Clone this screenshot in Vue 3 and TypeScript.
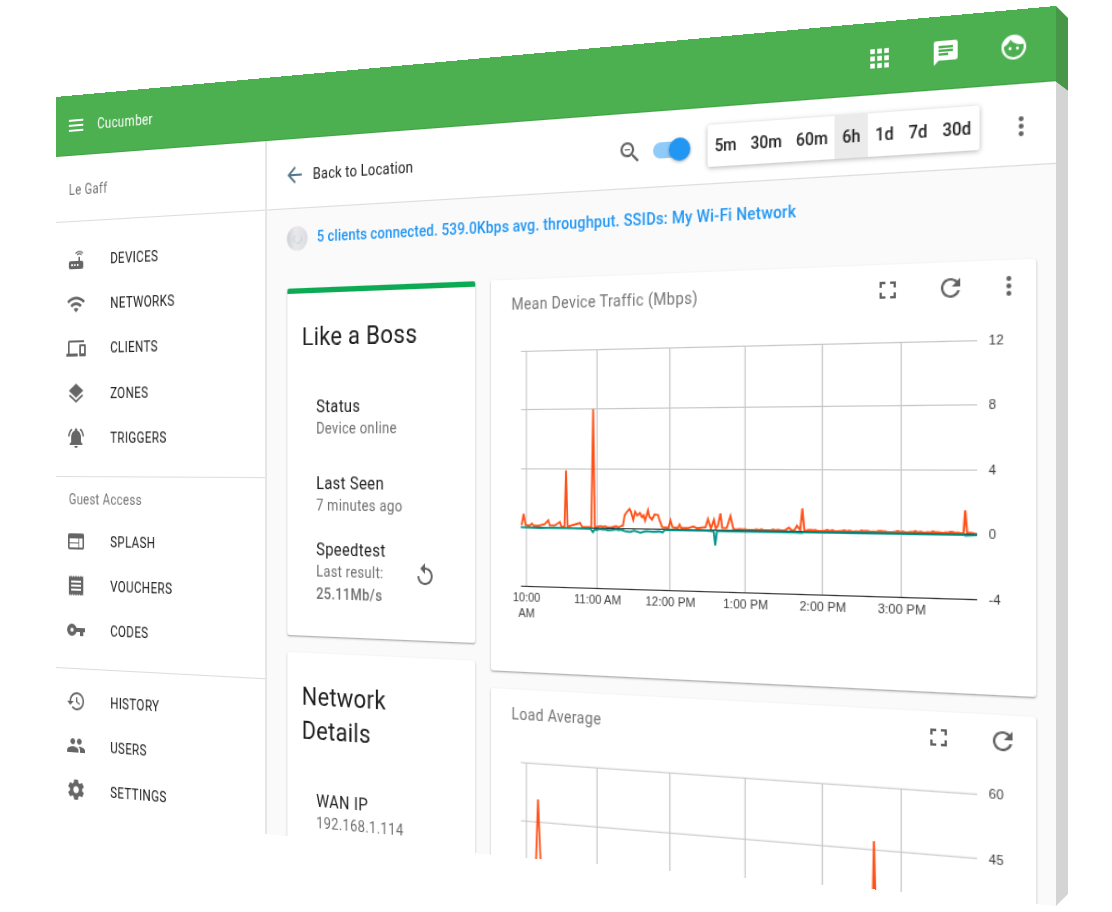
<script setup lang="ts">
interface NavItem {
  label: string
  icon: string
}
type Point = [number, number]

const icons: Record<string, string> = {
  menu: 'M3 18h18v-2H3v2zm0-5h18v-2H3v2zm0-7v2h18V6H3z',
  router:
    'M20.2 5.9l.8-.8C19.6 3.7 17.8 3 16 3s-3.6.7-5 2.1l.8.8C13 4.8 14.5 4.2 16 4.2s3 .6 4.2 1.7zm-.9.8c-.9-.9-2.1-1.4-3.3-1.4s-2.4.5-3.3 1.4l.8.8c.7-.7 1.6-1 2.5-1 .9 0 1.8.3 2.5 1l.8-.8zM19 13h-2V9h-2v4H5c-1.1 0-2 .9-2 2v4c0 1.1.9 2 2 2h14c1.1 0 2-.9 2-2v-4c0-1.1-.9-2-2-2zM8 18H6v-2h2v2zm3.5 0h-2v-2h2v2zm3.5 0h-2v-2h2v2z',
  wifi: 'M1 9l2 2c4.97-4.97 13.03-4.97 18 0l2-2C16.93 2.93 7.08 2.93 1 9zm8 8l3 3 3-3c-1.65-1.66-4.34-1.66-6 0zm-4-4l2 2c2.76-2.76 7.24-2.76 10 0l2-2C15.14 9.14 8.87 9.14 5 13z',
  devices:
    'M4 6h18V4H4c-1.1 0-2 .9-2 2v11H0v3h14v-3H4V6zm19 2h-6c-.55 0-1 .45-1 1v10c0 .55.45 1 1 1h6c.55 0 1-.45 1-1V9c0-.55-.45-1-1-1zm-1 9h-4v-7h4v7z',
  layers:
    'M11.99 18.54l-7.37-5.73L3 14.07l9 7 9-7-1.63-1.27-7.38 5.74zM12 16l7.36-5.73L21 9l-9-7-9 7 1.63 1.27L12 16z',
  bell: 'M7.58 4.08L6.15 2.65C3.75 4.48 2.17 7.3 2.03 10.5h2c.15-2.65 1.51-4.97 3.55-6.42zm12.39 6.42h2c-.15-3.2-1.73-6.02-4.12-7.85l-1.42 1.43c2.02 1.45 3.39 3.77 3.54 6.42zM18 11c0-3.07-1.64-5.64-4.5-6.32V4c0-.83-.67-1.5-1.5-1.5s-1.5.67-1.5 1.5v.68C7.63 5.36 6 7.92 6 11v5l-2 2v1h16v-1l-2-2v-5zm-6 11c.14 0 .27-.01.4-.04.65-.14 1.18-.58 1.44-1.18.1-.24.15-.5.15-.78h-4c.01 1.1.9 2 2.01 2z',
  web: 'M20 4H4c-1.1 0-1.99.9-1.99 2L2 18c0 1.1.9 2 2 2h16c1.1 0 2-.9 2-2V6c0-1.1-.9-2-2-2zm-5 14H4v-4h11v4zm0-5H4V9h11v4zm5 5h-4V9h4v9z',
  receipt:
    'M18 17H6v-2h12v2zm0-4H6v-2h12v2zm0-4H6V7h12v2zM3 22l1.5-1.5L6 22l1.5-1.5L9 22l1.5-1.5L12 22l1.5-1.5L15 22l1.5-1.5L18 22l1.5-1.5L21 22V2l-1.5 1.5L18 2l-1.5 1.5L15 2l-1.5 1.5L12 2l-1.5 1.5L9 2 7.5 3.5 6 2 4.5 3.5 3 2v20z',
  key: 'M12.65 10C11.83 7.67 9.61 6 7 6c-3.31 0-6 2.69-6 6s2.69 6 6 6c2.61 0 4.83-1.67 5.65-4H17v4h4v-4h2v-4H12.65zM7 14c-1.1 0-2-.9-2-2s.9-2 2-2 2 .9 2 2-.9 2-2 2z',
  history:
    'M13 3c-4.97 0-9 4.03-9 9H1l3.89 3.89.07.14L9 12H6c0-3.87 3.13-7 7-7s7 3.13 7 7-3.13 7-7 7c-1.93 0-3.68-.79-4.94-2.06l-1.42 1.42C8.27 19.99 10.51 21 13 21c4.97 0 9-4.03 9-9s-4.03-9-9-9zm-1 5v5l4.28 2.54.72-1.21-3.5-2.08V8H12z',
  people:
    'M16 11c1.66 0 2.99-1.34 2.99-3S17.66 5 16 5c-1.66 0-3 1.34-3 3s1.34 3 3 3zm-8 0c1.66 0 2.99-1.34 2.99-3S9.66 5 8 5C6.34 5 5 6.34 5 8s1.34 3 3 3zm0 2c-2.33 0-7 1.17-7 3.5V19h14v-2.5c0-2.33-4.67-3.5-7-3.5zm8 0c-.29 0-.62.02-.97.05 1.16.84 1.97 1.97 1.97 3.45V19h6v-2.5c0-2.33-4.67-3.5-7-3.5z',
  settings:
    'M19.43 12.98c.04-.32.07-.64.07-.98s-.03-.66-.07-.98l2.11-1.65c.19-.15.24-.42.12-.64l-2-3.46c-.12-.22-.39-.3-.61-.22l-2.49 1c-.52-.4-1.08-.73-1.69-.98l-.38-2.65C14.46 2.18 14.25 2 14 2h-4c-.25 0-.46.18-.49.42l-.38 2.65c-.61.25-1.17.59-1.69.98l-2.49-1c-.23-.09-.49 0-.61.22l-2 3.46c-.13.22-.07.49.12.64l2.11 1.65c-.04.32-.07.65-.07.98s.03.66.07.98l-2.11 1.65c-.19.15-.24.42-.12.64l2 3.46c.12.22.39.3.61.22l2.49-1c.52.4 1.08.73 1.69.98l.38 2.65c.03.24.24.42.49.42h4c.25 0 .46-.18.49-.42l.38-2.65c.61-.25 1.17-.59 1.69-.98l2.49 1c.23.09.49 0 .61-.22l2-3.46c.12-.22.07-.49-.12-.64l-2.11-1.65zM12 15.5c-1.93 0-3.5-1.57-3.5-3.5s1.57-3.5 3.5-3.5 3.5 1.57 3.5 3.5-1.57 3.5-3.5 3.5z',
  apps: 'M4 8h4V4H4v4zm6 12h4v-4h-4v4zm-6 0h4v-4H4v4zm0-6h4v-4H4v4zm6 0h4v-4h-4v4zm6-10v4h4V4h-4zm-6 4h4V4h-4v4zm6 6h4v-4h-4v4zm0 6h4v-4h-4v4z',
  chat: 'M20 2H4c-1.1 0-1.99.9-1.99 2L2 22l4-4h14c1.1 0 2-.9 2-2V4c0-1.1-.9-2-2-2zM6 9h12v2H6V9zm8 5H6v-2h8v2zm4-6H6V6h12v2z',
  face: 'M9 11.75c-.69 0-1.25.56-1.25 1.25s.56 1.25 1.25 1.25 1.25-.56 1.25-1.25-.56-1.25-1.25-1.25zm6 0c-.69 0-1.25.56-1.25 1.25s.56 1.25 1.25 1.25 1.25-.56 1.25-1.25-.56-1.25-1.25-1.25zM12 2C6.48 2 2 6.48 2 12s4.48 10 10 10 10-4.48 10-10S17.52 2 12 2zm0 18c-4.41 0-8-3.59-8-8 0-.29.02-.58.05-.86 2.36-1.05 4.23-2.98 5.21-5.37C11.07 8.33 14.05 10 17.42 10c.78 0 1.53-.09 2.25-.26.21.71.33 1.47.33 2.26 0 4.41-3.59 8-8 8z',
  back: 'M20 11H7.83l5.59-5.59L12 4l-8 8 8 8 1.41-1.41L7.83 13H20v-2z',
  zoomOut:
    'M15.5 14h-.79l-.28-.27C15.41 12.59 16 11.11 16 9.5 16 5.91 13.09 3 9.5 3S3 5.91 3 9.5 5.91 16 9.5 16c1.61 0 3.09-.59 4.23-1.57l.27.28v.79l5 4.99L20.49 19l-4.99-5zm-6 0C7.01 14 5 11.99 5 9.5S7.01 5 9.5 5 14 7.01 14 9.5 11.99 14 9.5 14zM7 9h5v1H7z',
  more: 'M12 8c1.1 0 2-.9 2-2s-.9-2-2-2-2 .9-2 2 .9 2 2 2zm0 2c-1.1 0-2 .9-2 2s.9 2 2 2 2-.9 2-2-.9-2-2-2zm0 6c-1.1 0-2 .9-2 2s.9 2 2 2 2-.9 2-2-.9-2-2-2z',
  fullscreen: 'M7 14H5v5h5v-2H7v-3zm-2-4h2V7h3V5H5v5zm12 7h-3v2h5v-5h-2v3zM14 5v2h3v3h2V5h-5z',
  refresh:
    'M17.65 6.35C16.2 4.9 14.21 4 12 4c-4.42 0-7.99 3.58-7.99 8s3.57 8 7.99 8c3.73 0 6.84-2.55 7.73-6h-2.08c-.82 2.33-3.04 4-5.65 4-3.31 0-6-2.69-6-6s2.69-6 6-6c1.66 0 3.14.69 4.22 1.78L13 11h7V4l-2.35 2.35z',
  replay:
    'M12 5V1L7 6l5 5V7c3.31 0 6 2.69 6 6s-2.69 6-6 6-6-2.69-6-6H4c0 4.42 3.58 8 8 8s8-3.58 8-8-3.58-8-8-8z',
}

const primary: NavItem[] = [
  { label: 'DEVICES', icon: 'router' },
  { label: 'NETWORKS', icon: 'wifi' },
  { label: 'CLIENTS', icon: 'devices' },
  { label: 'ZONES', icon: 'layers' },
  { label: 'TRIGGERS', icon: 'bell' },
]
const guest: NavItem[] = [
  { label: 'SPLASH', icon: 'web' },
  { label: 'VOUCHERS', icon: 'receipt' },
  { label: 'CODES', icon: 'key' },
]
const account: NavItem[] = [
  { label: 'HISTORY', icon: 'history' },
  { label: 'USERS', icon: 'people' },
  { label: 'SETTINGS', icon: 'settings' },
]
const ranges = ['5m', '30m', '60m', '6h', '1d', '7d', '30d']
const activeRange = '6h'

const gridX = [526.8, 596.4, 665.8, 735.3, 804.3, 872.5]
const timeLabels = ['', '11:00 AM', '12:00 PM', '1:00 PM', '2:00 PM', '3:00 PM']
const trafficRows = [
  { y: 265.5, label: '12' },
  { y: 317.5, label: '8' },
  { y: 370.5, label: '4' },
  { y: 422.5, label: '0' },
]

// Low-level jitter between the traffic peaks.
function noise(from: number, to: number, base: number, amp: number): Point[] {
  const out: Point[] = []
  let i = 0
  for (let x = from; x < to; x += 2.1) {
    i += 1
    out.push([x, base + amp * Math.abs(Math.sin(i * 2.7) * Math.cos(i * 1.3))])
  }
  return out
}

const zero = 422.7
const toLine = (pts: Point[]) => pts.map(([x, h]) => `${x.toFixed(1)},${(zero - h).toFixed(1)}`).join(' ')

const download: Point[] = [
  [522, 2], [524, 12], [526, 2], [530, 1.5], [532.4, 3.5], [534, 1.5], [539, 1.5], [545, 3], [548.6, 6.5],
  [550, 2], [555, 2], [560, 5.2], [561.5, 1], [564.6, 1], [566.1, 51], [567.6, 1], [571, 2], [579.8, 4.6],
  [582, 1], [590.8, 1], [592.6, 105], [594.2, 1.5],
  ...noise(596, 620, 1, 1.4),
  [621.4, 3], [623, 12], [624.8, 14.5], [627.6, 17.5], [629, 15], [631.2, 8], [633, 15], [635, 12], [637.6, 14],
  [639.5, 10.5], [641, 12], [642.4, 7.5], [645.2, 16.5], [646.5, 11], [649, 8.5], [651.5, 13], [654.7, 12.5],
  [656.5, 7], [658.6, 2], [664.5, 1.5], [666.4, 8], [668.4, 2], [673.4, 1.5], [674.9, 4.5], [676.3, 1.5],
  [683, 1.5], [688, 3], [691.2, 1.5], [699, 2.5], [701.3, 9.5], [704, 1.5], [706.8, 9], [708.5, 1.5],
  [710.5, 4], [712.8, 14.5], [714.4, 2], [718.5, 2], [722, 12.5], [724.6, 1.5],
  ...noise(727, 773, 0.7, 0.8),
  [774.8, 3.2], [777, 1], [779.5, 1], [781.9, 5], [784.8, 1.5], [786.7, 19.5], [788.4, 1.5],
  ...noise(790, 924, 0.7, 1.2),
  [924.8, 1], [926.2, 19.5], [927.8, 1], [931, 1.2], [935.9, 0.4],
]
const upload: Point[] = [
  [521.4, 0], [540, -0.4], [555, 0], [590, -0.4], [592.4, -3.4], [594, -1],
  ...noise(596, 620, -1.4, 1),
  [623, -2], [628, -2.6], [632, -1.4], [638, -3.2], [643, -1.6], [650, -2.2], [656, -1.8], [659, -2.6], [661, -0.4],
  [700, -0.4], [706.6, -1], [708, -13], [709.6, -0.6], [780, -0.6], [786, -1], [788, -0.4], [925, -0.4],
  [926.5, -1], [935.9, -0.4],
]
</script>

<template>
  <div class="stage">
    <svg class="edge" width="12" height="900" viewBox="0 0 12 900" aria-hidden="true">
      <path d="M0 0L12 12V85L0 76Z" fill="#489749" />
      <path d="M0 76L12 85V888L0 900Z" fill="#d4d4d4" />
    </svg>

    <div class="panel">
      <header class="topbar">
        <svg class="icon" viewBox="0 0 24 24"><path :d="icons.menu" /></svg>
        <span class="brand">Cucumber</span>
        <nav class="actions">
          <svg class="icon" viewBox="0 0 24 24"><path :d="icons.apps" /></svg>
          <svg class="icon" viewBox="0 0 24 24"><path :d="icons.chat" /></svg>
          <svg class="icon" viewBox="0 0 24 24"><path :d="icons.face" /></svg>
        </nav>
      </header>

      <div class="body">
        <aside class="sidebar">
          <div class="place">Le Gaff</div>
          <ul class="nav first">
            <li v-for="item in primary" :key="item.label">
              <svg class="icon" viewBox="0 0 24 24"><path :d="icons[item.icon]" /></svg>
              <span>{{ item.label }}</span>
            </li>
          </ul>
          <div class="subhead">Guest Access</div>
          <ul class="nav second">
            <li v-for="item in guest" :key="item.label">
              <svg class="icon" viewBox="0 0 24 24"><path :d="icons[item.icon]" /></svg>
              <span>{{ item.label }}</span>
            </li>
          </ul>
          <ul class="nav third">
            <li v-for="item in account" :key="item.label">
              <svg class="icon" viewBox="0 0 24 24"><path :d="icons[item.icon]" /></svg>
              <span>{{ item.label }}</span>
            </li>
          </ul>
        </aside>

        <main class="main">
          <div class="toolbar">
            <svg class="icon back" viewBox="0 0 24 24"><path :d="icons.back" /></svg>
            <span class="back-label">Back to Location</span>
            <div class="tools">
              <svg class="icon" viewBox="0 0 24 24"><path :d="icons.zoomOut" /></svg>
              <span class="switch"><i></i></span>
              <div class="ranges">
                <span v-for="r in ranges" :key="r" :class="{ on: r === activeRange }">{{ r }}</span>
              </div>
              <svg class="icon dots" viewBox="0 0 24 24"><path :d="icons.more" /></svg>
            </div>
          </div>

          <div class="summary">
            <svg width="24" height="24" viewBox="0 0 24 24">
              <defs>
                <linearGradient id="ap" x1="0" y1="0" x2="1" y2="0">
                  <stop offset="0" stop-color="#cfcfd4" />
                  <stop offset=".4" stop-color="#e9e9ed" />
                  <stop offset="1" stop-color="#dcdce2" />
                </linearGradient>
              </defs>
              <circle cx="12" cy="12" r="11.5" fill="url(#ap)" />
              <path d="M10 9.3a4 4 0 1 0 6 1.2" fill="none" stroke="#c3dccb" stroke-width="1.2" />
            </svg>
            <span>5 clients connected. 539.0Kbps avg. throughput. SSIDs: My Wi-Fi Network</span>
          </div>

          <div class="cards">
            <div class="col">
              <section class="card info boss">
                <h2>Like a Boss</h2>
                <div class="entry status">
                  <b>Status</b>
                  <span>Device online</span>
                </div>
                <div class="entry seen">
                  <b>Last Seen</b>
                  <span>7 minutes ago</span>
                </div>
                <div class="speed">
                  <div class="entry">
                    <b>Speedtest</b>
                    <span>Last result:</span>
                    <span class="rate">25.11Mb/s</span>
                  </div>
                  <svg class="icon" viewBox="0 0 24 24"><path :d="icons.replay" /></svg>
                </div>
              </section>
              <section class="card info network">
                <h2>Network<br />Details</h2>
                <div class="entry">
                  <b>WAN IP</b>
                  <span>192.168.1.114</span>
                </div>
              </section>
            </div>

            <div class="col wide">
              <section class="card chart traffic">
                <div class="chart-head">
                  <span>Mean Device Traffic (Mbps)</span>
                  <svg class="icon" viewBox="0 0 24 24"><path :d="icons.fullscreen" /></svg>
                  <svg class="icon" viewBox="0 0 24 24"><path :d="icons.refresh" /></svg>
                  <svg class="icon overflow" viewBox="0 0 24 24"><path :d="icons.more" /></svg>
                </div>
                <svg class="plot" width="493" height="310" viewBox="491 241 493 310">
                  <g class="grid">
                    <line v-for="x in gridX" :key="x" :x1="x" :x2="x" y1="265" y2="475" />
                    <line v-for="r in trafficRows" :key="r.y" x1="521.4" x2="936" :y1="r.y" :y2="r.y" />
                  </g>
                  <line class="axis" x1="521.4" x2="936" y1="475.5" y2="475.5" />
                  <polyline class="down" :points="toLine(download)" />
                  <line class="axis" x1="521.4" x2="936" y1="422.5" y2="422.5" />
                  <polyline class="up" :points="toLine(upload)" />
                  <g class="labels">
                    <text v-for="r in trafficRows" :key="r.y" x="945.6" :y="r.y + 3.6">{{ r.label }}</text>
                    <text x="945.6" y="478.8">-4</text>
                  </g>
                  <g class="labels mid">
                    <text x="527" y="489.2">10:00</text>
                    <text x="527" y="502.9">AM</text>
                    <text v-for="(x, i) in gridX" :key="x" :x="x + 0.4" y="489.2">{{ timeLabels[i] }}</text>
                  </g>
                </svg>
              </section>
              <section class="card chart load">
                <div class="chart-head">
                  <span>Load Average</span>
                  <svg class="icon" viewBox="0 0 24 24"><path :d="icons.fullscreen" /></svg>
                  <svg class="icon" viewBox="0 0 24 24"><path :d="icons.refresh" /></svg>
                </div>
                <svg class="plot" width="493" height="112" viewBox="491 608 493 112">
                  <g class="grid">
                    <line v-for="x in gridX" :key="x" :x1="x" :x2="x" y1="633" y2="720" />
                    <line x1="521.4" x2="936" y1="633.2" y2="633.2" />
                    <line x1="521.4" x2="936" y1="685.3" y2="685.3" />
                  </g>
                  <polyline class="down" points="536.4,720 538.4,665 540.9,720" />
                  <polyline class="down" points="848.4,720 849.2,678 850.2,720" />
                  <g class="labels">
                    <text x="945.6" y="636.3">60</text>
                    <text x="945.6" y="688.8">45</text>
                  </g>
                </svg>
              </section>
            </div>
          </div>
        </main>
      </div>
    </div>
  </div>
</template>

<style>
body {
  margin: 0;
  background: #fff;
}
</style>

<style scoped>
.stage {
  position: relative;
  width: 1112px;
  height: 912px;
  overflow: hidden;
  background: #fff;
  font-family: Roboto, 'Liberation Sans', sans-serif;
}
.edge {
  position: absolute;
  left: 1056px;
  top: 6px;
}
/* The flat 1000x718 dashboard, turned in space about the vertical axis. */
.panel {
  width: 1000px;
  height: 718px;
  overflow: hidden;
  background: #fff;
  transform-origin: 0 0;
  transform: matrix3d(0.78648, -0.092217, 0, -0.00020223, 0, 1, 0, 0, 0, 0, 1, 0, 56, 97, 0, 1);
}
.icon {
  width: 24px;
  height: 24px;
  flex: none;
  fill: #616161;
}
.topbar {
  display: flex;
  align-items: center;
  box-sizing: border-box;
  height: 60px;
  padding: 0 22.5px 0 12.5px;
  background: #4caf50;
  border-bottom: 1px solid #3ba540;
  color: #fff;
}
.topbar .icon {
  fill: #fff;
}
.brand {
  margin-left: 14.5px;
  font-size: 14px;
  letter-spacing: 0.4px;
}
.actions {
  display: flex;
  gap: 32px;
  margin-left: auto;
}
.body {
  display: flex;
  height: 658px;
}
.sidebar {
  width: 251px;
  box-sizing: border-box;
  border-right: 2px solid #e4e4e4;
  background: #fff;
}
.place {
  height: 65px;
  line-height: 69px;
  padding-left: 16px;
  border-bottom: 1px solid #dcdcdc;
  font-size: 14px;
  letter-spacing: 0.35px;
  color: #757575;
}
.nav {
  list-style: none;
  margin: 0;
  padding: 0;
}
.nav li {
  display: flex;
  align-items: center;
  height: 44.2px;
  padding-left: 12.5px;
  font-size: 14px;
  letter-spacing: 0.4px;
  color: #212121;
}
.nav .icon {
  fill: #666;
}
.nav li span {
  margin-left: 30.5px;
}
.nav.first {
  padding: 16px 0 16px;
  border-bottom: 1px solid #dedede;
}
.subhead {
  height: 42px;
  line-height: 45px;
  padding-left: 16px;
  font-size: 14px;
  letter-spacing: 0.3px;
  color: #757575;
}
.nav.second {
  padding-bottom: 15px;
  border-bottom: 1px solid #dcdcdc;
}
.nav.third {
  padding-top: 10px;
}
.main {
  flex: 1;
  background: #fafafa;
}
.toolbar {
  display: flex;
  align-items: center;
  box-sizing: border-box;
  height: 66px;
  padding: 2px 0 0 18.5px;
  background: #fff;
  border-bottom: 1px solid #dcdcdc;
  font-size: 14px;
  letter-spacing: 0.25px;
  color: #212121;
}
.icon.back {
  fill: #54788a;
}
.back-label {
  margin-left: 8.8px;
}
.tools {
  display: flex;
  align-items: center;
  margin-left: auto;
  padding-right: 16.5px;
}
.switch {
  width: 34px;
  height: 14px;
  margin: 0 17px 0 10.3px;
  border-radius: 7px;
  background: #90caf9;
}
.switch i {
  display: block;
  width: 20px;
  height: 20px;
  margin: -3px 0 0 15px;
  border-radius: 50%;
  background: #2196f3;
  box-shadow: 0 1px 3px rgba(0, 0, 0, 0.35);
}
.ranges {
  display: flex;
  height: 36px;
  line-height: 36px;
  margin-top: -1px;
  border-radius: 2px;
  background: #fff;
  box-shadow: 0 1px 4px rgba(0, 0, 0, 0.3);
  font-size: 14px;
  font-weight: 500;
  letter-spacing: 0;
}
.ranges span {
  padding: 0 6.35px;
}
.ranges .on {
  background: #ebebeb;
}
.icon.dots {
  margin-left: 22px;
}
.summary {
  display: flex;
  align-items: center;
  height: 56px;
  padding-left: 21.8px;
  font-size: 14px;
  font-weight: 500;
  letter-spacing: 0.18px;
  color: #2196f3;
}
.summary svg {
  margin-top: -1px;
}
.summary span {
  margin: -2px 0 0 10px;
}
.cards {
  display: flex;
  gap: 16px;
  padding: 19px 16px 0 23px;
}
.col {
  width: 201px;
  display: flex;
  flex-direction: column;
  gap: 16px;
}
.col.wide {
  width: 493px;
}
.card {
  box-sizing: border-box;
  background: #fff;
  border-radius: 2px;
  box-shadow: 0 1px 2px rgba(0, 0, 0, 0.38);
}
h2 {
  margin: 0 0 0 16px;
  font-size: 24px;
  font-weight: 400;
  line-height: 32px;
  letter-spacing: 0.28px;
  color: #212121;
}
.boss {
  height: 327px;
  border-top: 5px solid #0cab53;
  padding-top: 25px;
}
.entry {
  display: flex;
  flex-direction: column;
  padding-left: 32px;
}
.entry b {
  font-size: 16px;
  font-weight: 400;
  line-height: 20px;
  letter-spacing: 0.4px;
  color: #212121;
}
.entry span {
  font-size: 14px;
  line-height: 21px;
  letter-spacing: 0.36px;
  color: #707070;
}
.status {
  margin-top: 40px;
}
.seen {
  margin-top: 31px;
}
.speed {
  display: flex;
  align-items: center;
  justify-content: space-between;
  padding-right: 40px;
  margin-top: 20.5px;
}
.speed .entry span {
  line-height: 21.8px;
}
.entry .rate {
  font-weight: 500;
}
.network {
  height: 260px;
  padding-top: 25px;
}
.network .entry {
  margin-top: 39.6px;
}
.traffic {
  height: 351px;
}
.load {
  height: 240px;
}
.chart-head {
  display: flex;
  align-items: center;
  box-sizing: border-box;
  height: 40px;
  padding: 2px 10.5px 0 20.8px;
  font-size: 14px;
  letter-spacing: 0.32px;
  color: #757575;
}
.load .chart-head {
  padding-right: 15px;
}
.chart-head span {
  margin-right: auto;
  padding-top: 2px;
}
.chart-head .icon {
  margin-left: 28.6px;
}
.chart-head .overflow {
  margin-left: 24px;
}
.plot {
  display: block;
}
.grid line {
  stroke: #c6c6c6;
  stroke-width: 1.1;
}
.axis {
  stroke: #333;
  stroke-width: 1.2;
}
.down,
.up {
  fill: none;
  stroke-width: 1.8;
  stroke: #ff5118;
}
.up {
  stroke: #009688;
}
.labels text {
  font-family: 'Liberation Sans', Arial, sans-serif;
  font-size: 11px;
  fill: #444;
}
.labels.mid text {
  text-anchor: middle;
}
</style>
